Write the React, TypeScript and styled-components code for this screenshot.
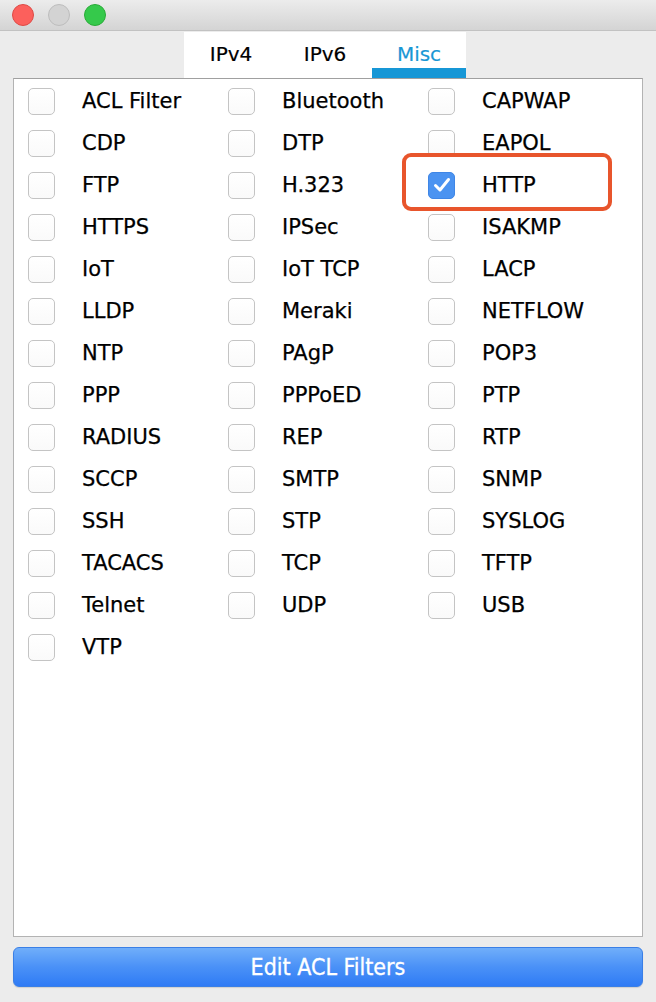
import { useState } from "react";
import styled, { createGlobalStyle } from "styled-components";

const protocols = [
  "ACL Filter", "Bluetooth", "CAPWAP",
  "CDP", "DTP", "EAPOL",
  "FTP", "H.323", "HTTP",
  "HTTPS", "IPSec", "ISAKMP",
  "IoT", "IoT TCP", "LACP",
  "LLDP", "Meraki", "NETFLOW",
  "NTP", "PAgP", "POP3",
  "PPP", "PPPoED", "PTP",
  "RADIUS", "REP", "RTP",
  "SCCP", "SMTP", "SNMP",
  "SSH", "STP", "SYSLOG",
  "TACACS", "TCP", "TFTP",
  "Telnet", "UDP", "USB",
  "VTP",
];

const tabs = ["IPv4", "IPv6", "Misc"];

const GlobalStyle = createGlobalStyle`
  html, body {
    margin: 0;
    padding: 0;
    background: #ececec;
  }
  body {
    font-family: "DejaVu Sans", "Liberation Sans", sans-serif;
  }
`;

export default function App() {
  const [activeTab, setActiveTab] = useState("Misc");
  const [checked, setChecked] = useState<Record<string, boolean>>({ HTTP: true });

  const toggle = (name: string) =>
    setChecked((prev) => ({ ...prev, [name]: !prev[name] }));

  return (
    <Window>
      <GlobalStyle />
      <TitleBar>
        <Light color="#fc605c" border="#de4a45" />
        <Light color="#d3d3d3" border="#bdbdbd" />
        <Light color="#35c94b" border="#29ab37" />
      </TitleBar>

      <Body>
        <TabStrip>
          {tabs.map((t) => (
            <Tab key={t} active={t === activeTab} onClick={() => setActiveTab(t)}>
              {t}
            </Tab>
          ))}
        </TabStrip>

        <Panel>
          <Grid>
            {protocols.map((p) => (
              <Cell key={p} onClick={() => toggle(p)}>
                <Box checked={!!checked[p]}>
                  {checked[p] && (
                    <svg width="20" height="18" viewBox="0 0 20 18">
                      <path
                        d="M3.5 9.5 L8 14 L16.5 3.5"
                        fill="none"
                        stroke="#fff"
                        strokeWidth="3"
                        strokeLinecap="round"
                        strokeLinejoin="round"
                      />
                    </svg>
                  )}
                </Box>
                <Label>{p}</Label>
                {p === "HTTP" && <Highlight />}
              </Cell>
            ))}
          </Grid>
        </Panel>

        <EditButton>Edit ACL Filters</EditButton>
      </Body>
    </Window>
  );
}

const Window = styled.div`
  width: 656px;
  height: 1002px;
  background: #ececec;
  display: flex;
  flex-direction: column;
  overflow: hidden;
`;

const TitleBar = styled.div`
  height: 31px;
  flex-shrink: 0;
  display: flex;
  align-items: center;
  gap: 14px;
  padding-left: 12px;
  background: linear-gradient(#ececec, #d4d4d4);
  border-bottom: 1px solid #c2c2c2;
  box-sizing: border-box;
`;

const Light = styled.span<{ color: string; border: string }>`
  width: 22px;
  height: 22px;
  border-radius: 50%;
  box-sizing: border-box;
  background: ${(p) => p.color};
  border: 1px solid ${(p) => p.border};
`;

const Body = styled.div`
  flex: 1;
  display: flex;
  flex-direction: column;
  padding: 1px 13px 0;
`;

const TabStrip = styled.div`
  align-self: center;
  margin-left: -6px;
  display: flex;
  background: #fff;
  height: 46px;
`;

const Tab = styled.div<{ active: boolean }>`
  width: 94px;
  box-sizing: border-box;
  display: flex;
  justify-content: center;
  padding-top: 10px;
  font-size: 20px;
  -webkit-text-stroke: 0.2px currentColor;
  color: ${(p) => (p.active ? "#1a97d5" : "#000")};
  border-bottom: 10px solid ${(p) => (p.active ? "#1797d6" : "transparent")};
  cursor: default;
`;

const Panel = styled.div`
  height: 859px;
  box-sizing: border-box;
  background: #fff;
  border: 1px solid #b3b3b3;
  border-top-color: #a0a0a0;
  padding: 1px 0 0 14px;
`;

const Grid = styled.div`
  display: grid;
  grid-template-columns: repeat(3, 200px);
  grid-auto-rows: 42px;
`;

const Cell = styled.div`
  position: relative;
  display: flex;
  align-items: center;
  gap: 27px;
  font-size: 21px;
  color: #000;
  cursor: default;
`;

const Box = styled.span<{ checked: boolean }>`
  width: 27px;
  height: 27px;
  box-sizing: border-box;
  border-radius: 5px;
  display: flex;
  align-items: center;
  justify-content: center;
  background: ${(p) => (p.checked ? "#4b93f1" : "linear-gradient(#fff, #fafafa)")};
  border: 1px solid ${(p) => (p.checked ? "#3f86e6" : "#c4c4c4")};
`;

const Label = styled.span`
  line-height: 1;
  -webkit-text-stroke: 0.25px currentColor;
`;

const Highlight = styled.span`
  position: absolute;
  left: -26px;
  top: -11px;
  width: 210px;
  height: 58px;
  box-sizing: border-box;
  border: 4px solid #e8552c;
  border-radius: 9px;
  pointer-events: none;
`;

const EditButton = styled.button`
  margin-top: 10px;
  height: 40px;
  width: 100%;
  border-radius: 6px;
  border: 1px solid #3a7fe6;
  background: linear-gradient(#70aefa, #4a91f7 50%, #2f7bf5);
  color: #fff;
  font-family: "DejaVu Sans", "Liberation Sans", sans-serif;
  font-stretch: condensed;
  font-size: 23px;
  -webkit-text-stroke: 0.3px #fff;
  padding: 0;
  box-shadow: 0 1px 1px rgba(0, 0, 0, 0.12);
`;
